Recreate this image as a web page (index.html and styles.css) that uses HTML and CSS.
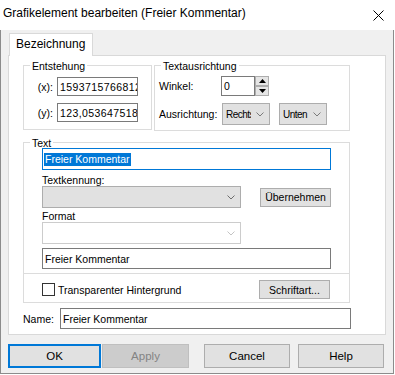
FILE: index.html
```html
<!DOCTYPE html>
<html lang="de">
<head>
  <meta charset="UTF-8">
  <title>Grafikelement bearbeiten</title>
  <link rel="stylesheet" href="styles.css">
</head>
<body>

<div class="window">
  <div class="titlebar">
    <span class="title">Grafikelement bearbeiten (Freier Kommentar)</span>
    <svg class="close" width="11" height="11" viewBox="0 0 11 11">
      <path d="M0.5 0.5 L10.5 10.5 M10.5 0.5 L0.5 10.5" stroke="#000" stroke-width="1" fill="none"/>
    </svg>
  </div>

  <div class="client">
    <div class="tabs">
      <div class="tab">Bezeichnung</div>
    </div>

    <div class="page">
      <div class="top-row">
        <fieldset class="group origin">
          <legend>Entstehung</legend>
          <div class="coord first">
            <span class="coord-label">(x):</span>
            <div class="field num">15937157668123</div>
          </div>
          <div class="coord">
            <span class="coord-label">(y):</span>
            <div class="field num">123,0536475182</div>
          </div>
        </fieldset>

        <fieldset class="group align">
          <legend>Textausrichtung</legend>
          <div class="align-row first">
            <span class="align-label">Winkel:</span>
            <div class="spin">
              <div class="field spin-value">0</div>
              <div class="spin-buttons">
                <div class="spin-btn">
                  <svg width="7" height="4" viewBox="0 0 7 4"><path d="M3.5 0 L7 4 L0 4 Z" fill="#000"/></svg>
                </div>
                <div class="spin-btn">
                  <svg width="7" height="4" viewBox="0 0 7 4"><path d="M0 0 L7 0 L3.5 4 Z" fill="#000"/></svg>
                </div>
              </div>
            </div>
          </div>
          <div class="align-row">
            <span class="align-label">Ausrichtung:</span>
            <div class="combo small">
              <span class="combo-text">Rechts</span>
              <svg class="chevron" width="8" height="5" viewBox="0 0 8 5"><path d="M0.5 0.5 L4 4 L7.5 0.5" stroke="#7a7a7a" fill="none"/></svg>
            </div>
            <div class="combo small second">
              <span class="combo-text">Unten</span>
              <svg class="chevron" width="8" height="5" viewBox="0 0 8 5"><path d="M0.5 0.5 L4 4 L7.5 0.5" stroke="#7a7a7a" fill="none"/></svg>
            </div>
          </div>
        </fieldset>
      </div>

      <fieldset class="group text">
        <legend>Text</legend>
        <div class="text-body">
          <div class="field selected"><span class="sel">Freier Kommentar</span></div>
          <div class="caption">Textkennung:</div>
          <div class="combo-row">
            <div class="combo wide">
              <span class="combo-text"></span>
              <svg class="chevron" width="8" height="5" viewBox="0 0 8 5"><path d="M0.5 0.5 L4 4 L7.5 0.5" stroke="#6d6d6d" fill="none"/></svg>
            </div>
            <button class="btn small-btn">Übernehmen</button>
          </div>
          <div class="caption format">Format</div>
          <div class="combo wide blank">
            <span class="combo-text"></span>
            <svg class="chevron" width="8" height="5" viewBox="0 0 8 5"><path d="M0.5 0.5 L4 4 L7.5 0.5" stroke="#c4c4c4" fill="none"/></svg>
          </div>
          <div class="field long">Freier Kommentar</div>
        </div>
        <div class="divider"></div>
        <div class="options">
          <label class="check"><span class="box"></span>Transparenter Hintergrund</label>
          <button class="btn small-btn">Schriftart...</button>
        </div>
      </fieldset>

      <div class="name-row">
        <span class="name-label">Name:</span>
        <div class="field name">Freier Kommentar</div>
      </div>
    </div>

    <div class="buttons">
      <button class="btn dlg ok">OK</button>
      <button class="btn dlg apply">Apply</button>
      <button class="btn dlg cancel">Cancel</button>
      <button class="btn dlg help">Help</button>
    </div>
  </div>
</div>

</body>
</html>
```

FILE: styles.css
```css
* {
  box-sizing: border-box;
}
body {
  margin: 0;
  background: #fff;
  font-family: "Liberation Sans", "Noto Sans", Arial, sans-serif;
  font-size: 10.5px;
  color: #000;
}
.window {
  width: 394px;
}

/* title bar */
.titlebar {
  height: 30px;
  background: #fff;
  display: flex;
  justify-content: space-between;
  align-items: flex-start;
}
.title {
  font-size: 12px;
  line-height: 27px;
  padding-left: 3px;
}
.close {
  margin: 10px 10px 0 0;
}

/* dialog client area */
.client {
  height: 344px;
  background: #f0f0f0;
  border: 1px solid #8c8c8c;
  border-top: none;
}
.tabs {
  display: flex;
  padding: 3px 0 0 8px;
}
.tab {
  position: relative;
  z-index: 1;
  font-size: 12px;
  line-height: 20px;
  padding: 0 7px 2px 6px;
  margin-bottom: -1px;
  background: #fff;
  border: 1px solid #d9d9d9;
  border-bottom: none;
}
.page {
  margin-left: 7px;
  width: 378px;
  height: 280px;
  background: #fff;
  border: 1px solid #d9d9d9;
  padding: 2px 0 0 14px;
}

/* group boxes */
.top-row {
  display: flex;
  align-items: flex-start;
}
.group {
  margin: 0;
  padding: 0;
  min-width: 0;
  border: 1px solid #dcdcdc;
}
.group legend {
  margin-left: 6px;
  padding: 2px 2px 0;
  line-height: 12px;
}
.origin {
  width: 129px;
  padding-bottom: 7px;
}
.align {
  width: 196px;
  margin-left: 2px;
  padding-bottom: 5px;
}
.text {
  width: 327px;
  margin-top: 4px;
}

/* inputs */
.field {
  height: 19px;
  background: #fff;
  border: 1px solid #7a7a7a;
  padding: 0 2px;
  display: flex;
  align-items: center;
  white-space: nowrap;
  overflow: hidden;
}
.num {
  letter-spacing: 0.4px;
}
.coord {
  display: flex;
  align-items: center;
  margin-top: 7px;
}
.coord.first {
  margin-top: 5px;
}
.coord-label {
  width: 29px;
  margin-right: 4px;
  text-align: right;
}
.coord .field {
  width: 81px;
}

.align-row {
  display: flex;
  align-items: center;
  margin-top: 7px;
}
.align-row.first {
  margin-top: 4px;
}
.align-label {
  width: 66px;
  padding-left: 4px;
}
.spin {
  display: flex;
}
.spin-value {
  width: 34px;
  height: 20px;
}
.spin-buttons {
  width: 14px;
  height: 20px;
  display: flex;
  flex-direction: column;
}
.spin-btn {
  height: 10px;
  background: #e5e5e5;
  border: 1px solid #adadad;
  display: flex;
  align-items: center;
  justify-content: center;
}

.combo {
  height: 22px;
  background: #e1e1e1;
  border: 1px solid #adadad;
  display: flex;
  align-items: center;
  padding: 0 5px 0 3px;
}
.combo-text {
  flex: 1;
  min-width: 0;
  overflow: hidden;
  white-space: nowrap;
}
.chevron {
  margin-left: 5px;
  flex-shrink: 0;
}
.combo.small {
  width: 48px;
  margin-left: 1px;
}
.combo.small .combo-text {
  font-size: 10px;
  letter-spacing: -0.5px;
}
.combo.small.second {
  margin-left: 9px;
}
.combo.wide {
  width: 199px;
}
.combo.blank {
  background: #fff;
  border-color: #cccccc;
}

/* text group */
.text-body {
  margin-top: -1px;
  padding: 0 18px;
}
.field.selected {
  height: 22px;
  padding: 0 1px;
  border-color: #0078d7;
}
.sel {
  background: #0078d7;
  color: #fff;
  line-height: 13px;
  padding: 0 1px;
}
.caption {
  line-height: 12px;
  margin-top: 4px;
}
.caption.format {
  margin-top: 2px;
}
.combo-row {
  display: flex;
  align-items: center;
  justify-content: space-between;
}
.field.long {
  height: 21px;
  margin-top: 4px;
}
.divider {
  height: 1px;
  margin-top: 4px;
  background: #dcdcdc;
}
.options {
  display: flex;
  align-items: center;
  justify-content: space-between;
  padding: 6px 19px 3px 18px;
}
.check {
  display: flex;
  align-items: center;
  gap: 3px;
}
.box {
  width: 13px;
  height: 13px;
  background: #fff;
  border: 1px solid #333;
}

.name-row {
  display: flex;
  align-items: center;
  margin-top: 5px;
}
.name-label {
  width: 37px;
}
.field.name {
  width: 291px;
  height: 21px;
}

/* buttons */
.btn {
  font-family: inherit;
  font-size: 10.5px;
  color: #000;
  background: #e1e1e1;
  border: 1px solid #adadad;
  border-radius: 0;
  padding: 0;
}
.small-btn {
  width: 71px;
  height: 19px;
}
.buttons {
  display: flex;
  margin: 9px 0 0 7px;
}
.dlg {
  height: 24px;
  font-size: 11.5px;
}
.ok {
  width: 93px;
  border: 2px solid #0078d7;
}
.apply {
  width: 87px;
  margin-left: 1px;
  background: #cccccc;
  border-color: #bfbfbf;
  color: #838383;
}
.cancel {
  width: 86px;
  margin-left: 15px;
}
.help {
  width: 86px;
  margin-left: 8px;
}
```
